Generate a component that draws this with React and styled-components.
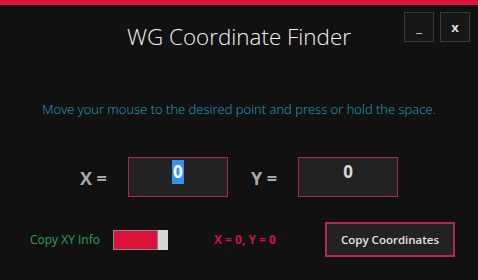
import React from 'react'
import styled, { createGlobalStyle } from 'styled-components'

const GlobalStyle = createGlobalStyle`
  html, body {
    margin: 0;
    padding: 0;
    background: #111111;
  }
  body {
    font-family: 'Open Sans', 'Liberation Sans', sans-serif;
  }
`

const Window = styled.div`
  width: 478px;
  height: 280px;
  background: #111111;
  display: flex;
  flex-direction: column;
  overflow: hidden;
`

const AccentBar = styled.div`
  height: 5px;
  background: #dc143c;
`

const Header = styled.div`
  display: grid;
  grid-template-columns: 1fr auto 1fr;
  padding: 7px 8px 0;
`

const Title = styled.h1`
  grid-column: 2;
  margin: 10px 0 0;
  font-size: 22.4px;
  line-height: 30px;
  font-weight: 300;
  color: #f2f2f2;
  white-space: nowrap;
`

const Controls = styled.div`
  grid-column: 3;
  justify-self: end;
  align-self: start;
  display: flex;
  gap: 6px;
`

const ControlButton = styled.button`
  width: 30px;
  height: 30px;
  padding: 0;
  background: #161616;
  border: 1px solid #3a3a3a;
  color: #dddddd;
  font-family: 'Open Sans', sans-serif;
  font-size: 13px;
  font-weight: ${p => (p.bold ? 700 : 400)};
  line-height: 1;
  cursor: pointer;
`

const Hint = styled.p`
  margin: 48px 0 0;
  text-align: center;
  font-size: 13px;
  line-height: 18px;
  font-weight: 300;
  color: #22a2c6;
`

const CoordRow = styled.div`
  margin-top: 39px;
  display: flex;
  align-items: center;
  justify-content: center;
`

const AxisLabel = styled.span`
  font-size: 18px;
  font-weight: 700;
  color: #a9a9a9;
  margin-left: ${p => p.offset || 0}px;
  margin-right: 21px;
  padding-top: 2px;
`

const ValueBox = styled.div`
  width: 100px;
  height: 40px;
  box-sizing: border-box;
  border: 1px solid #b3254a;
  background: #222222;
  display: flex;
  align-items: flex-start;
  justify-content: center;
  padding-top: 2px;
`

const Value = styled.span`
  font-size: 17px;
  font-weight: 700;
  line-height: 24px;
  padding: 0 1px;
  background: ${p => (p.selected ? '#3391f0' : 'transparent')};
  color: ${p => (p.selected ? '#ffffff' : '#d8d8d8')};
`

const ActionRow = styled.div`
  margin-top: 25px;
  display: flex;
  align-items: center;
  padding-left: 30px;
`

const ToggleLabel = styled.span`
  font-size: 12px;
  color: #27a35c;
  width: 83px;
`

const Toggle = styled.div`
  display: flex;
  height: 20px;
`

const ToggleTrack = styled.div`
  width: 45px;
  box-sizing: border-box;
  border: 1px solid #8a8a8a;
  background: ${p => (p.on ? '#dc143c' : '#333')};
`

const ToggleKnob = styled.div`
  width: 10px;
  background: #d4d4d4;
`

const Status = styled.span`
  margin-left: 46px;
  width: 111px;
  font-size: 12px;
  font-weight: 700;
  color: #cc1440;
  white-space: nowrap;
`

const CopyButton = styled.button`
  width: 130px;
  height: 35px;
  background: #222222;
  border: 2px solid #b8284e;
  color: #e4e4e4;
  font-family: 'Open Sans', sans-serif;
  font-size: 11.5px;
  font-weight: 600;
  padding: 0;
  cursor: pointer;
`

export default function App() {
  const x = 0
  const y = 0
  return (
    <>
      <GlobalStyle />
      <Window>
        <AccentBar />
        <Header>
          <Title>WG Coordinate Finder</Title>
          <Controls>
            <ControlButton>_</ControlButton>
            <ControlButton bold>x</ControlButton>
          </Controls>
        </Header>
        <Hint>Move your mouse to the desired point and press or hold the space.</Hint>
        <CoordRow>
          <AxisLabel>X =</AxisLabel>
          <ValueBox>
            <Value selected>{x}</Value>
          </ValueBox>
          <AxisLabel offset={23}>Y =</AxisLabel>
          <ValueBox>
            <Value>{y}</Value>
          </ValueBox>
        </CoordRow>
        <ActionRow>
          <ToggleLabel>Copy XY Info</ToggleLabel>
          <Toggle>
            <ToggleTrack on />
            <ToggleKnob />
          </Toggle>
          <Status>{`X = ${x}, Y = ${y}`}</Status>
          <CopyButton>Copy Coordinates</CopyButton>
        </ActionRow>
      </Window>
    </>
  )
}
